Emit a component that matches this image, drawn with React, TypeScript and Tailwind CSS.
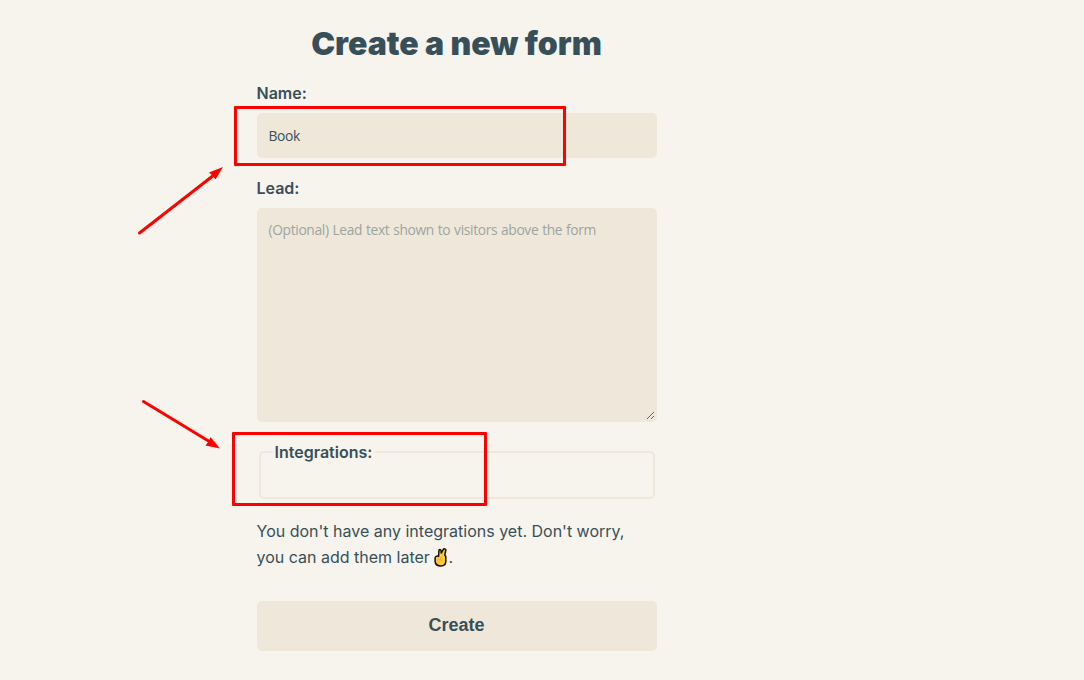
import { useState } from 'react';

const labelClass = '-ml-[0.5px] block h-[26px] text-[16px] leading-[26px] font-semibold';
const fieldClass =
  'block w-full rounded-[5px] border-2 border-[#efe8da] bg-[#efe8da] px-[9.5px] font-["Open_Sans",sans-serif] text-[13.8px] tracking-[-0.35px] [word-spacing:0.6px] text-[#374f59] outline-none placeholder:text-[#9ba5a0] placeholder:opacity-100';

function VictoryHand() {
  return (
    <svg className="mr-px inline-block h-[19px] w-[13px] align-[-4px]" viewBox="0 0 13 19" role="img" aria-label="victory hand">
      <path
        d="M4.600 8.200 4.900 2.600c.1-1.500 1.900-1.600 2.100-.1l.3 2.600L9.300 1.300c.8-1 2.700-.3 2.500 1L10.800 7l1 1.600v4.600c0 3-1.900 4.700-4.900 4.700-3.300 0-5.700-1.900-5.800-4.800V9.900c0-1.200 1.600-2.200 3.500-1.700Z"
        fill="#ffc83d"
        stroke="#17110a"
        strokeWidth="1.5"
        strokeLinejoin="round"
      />
      <path d="M4.200 9.600v2M6.500 9v2.300M3.200 12.500c2-1 4.200-.8 5 .2" fill="none" stroke="#e8a02a" strokeWidth=".7" />
    </svg>
  );
}

export default function App() {
  const [name, setName] = useState('Book');
  const [lead, setLead] = useState('');

  return (
    <div className='relative h-[680px] w-[1084px] overflow-hidden bg-[#f7f4ed] font-["Inter",sans-serif] text-[#374f59]'>
      <form className="ml-[257px] w-[400px] pt-[23px]" onSubmit={(e) => e.preventDefault()}>
        <h1 className="-ml-px h-[42px] text-center text-[32px] leading-[42px] font-black whitespace-nowrap">Create a new form</h1>

        {/* Name */}
        <div className="mt-[15px]">
          <label htmlFor="name" className={labelClass}>Name:</label>
          <input
            id="name"
            className={`${fieldClass} mt-[7px] h-[45px]`}
            value={name}
            onChange={(e) => setName(e.target.value)}
          />
        </div>

        {/* Lead */}
        <div className="mt-[17px]">
          <label htmlFor="lead" className={labelClass}>Lead:</label>
          <textarea
            id="lead"
            className={`${fieldClass} mt-[7px] h-[214px] resize py-[11px] leading-[18px]`}
            placeholder="(Optional) Lead text shown to visitors above the form"
            value={lead}
            onChange={(e) => setLead(e.target.value)}
          />
        </div>

        {/* Integrations */}
        <fieldset className="mx-[2px] mt-[17px] h-[60px] rounded-[5px] border-2 border-[#efe8da] pl-[11.5px]">
          <legend className="px-[2px] text-[16px] leading-[26px] font-semibold">Integrations:</legend>
        </fieldset>
        <p className="mt-[19px] -ml-[0.5px] text-[16px] leading-[26px]">
          You don't have any integrations yet. Don't worry,
          <br />
          you can add them later <VictoryHand />.
        </p>

        <button
          type="submit"
          className='mt-[31px] h-[50px] w-full rounded-[5px] bg-[#efe8da] pr-px pb-[2px] font-["Liberation_Sans",sans-serif] text-[18px] font-bold'
        >
          Create
        </button>
      </form>

      {/* Callouts */}
      <div className="pointer-events-none absolute top-[106px] left-[234px] h-[60px] w-[332px] rounded-[1px] border-3 border-[#ff0000]" />
      <div className="pointer-events-none absolute top-[432px] left-[232px] h-[74px] w-[255px] rounded-[1px] border-3 border-[#ff0000]" />
      <svg className="pointer-events-none absolute top-0 left-0" width="230" height="680" viewBox="0 0 230 680">
        <g stroke="#ff0000" strokeWidth="3" strokeLinecap="round">
          <path d="M139.500 233 214 175" />
          <path d="M143.500 401.500 211 442.500" />
        </g>
        <path d="M223 167 215.500 179.500 213 176 209 172.500Z" fill="#ff0000" />
        <path d="M220 448.500 205.500 445.500 208.500 441.500 210.500 437Z" fill="#ff0000" />
      </svg>
    </div>
  );
}
